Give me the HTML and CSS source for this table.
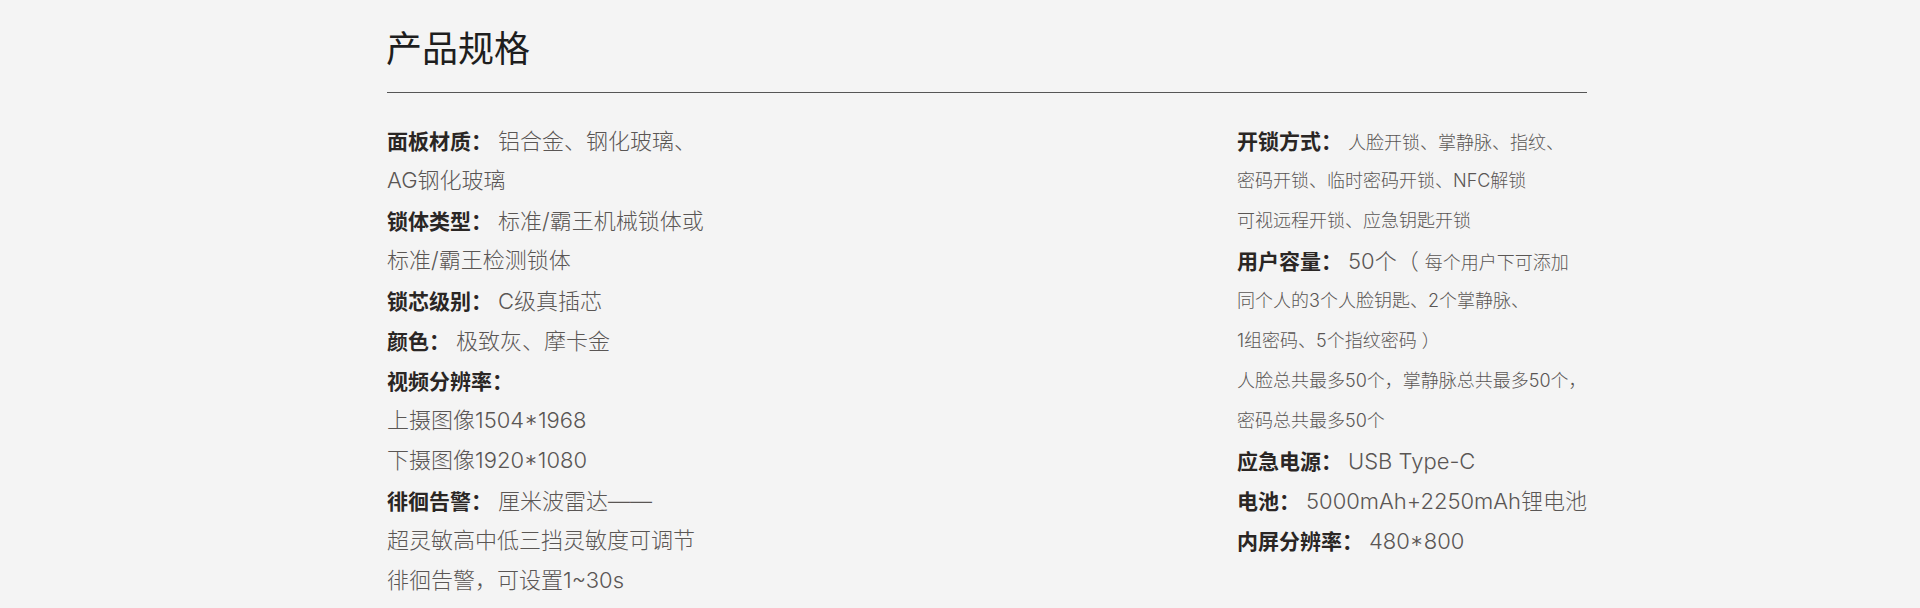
FILE: index.html
```html
<!DOCTYPE html>
<html lang="zh-CN">
<head>
<meta charset="utf-8">
<title>产品规格</title>
<link rel="stylesheet" href="styles.css">
</head>
<body>
<section class="specs">
  <h1 class="title">产品规格</h1>
  <div class="rule"></div>
  <div class="cols">
    <div class="col">
      <div class="row"><span class="k">面板材质：</span><span class="v">铝合金、钢化玻璃、</span></div>
      <div class="row"><span class="v">AG钢化玻璃</span></div>
      <div class="row"><span class="k">锁体类型：</span><span class="v">标准/霸王机械锁体或</span></div>
      <div class="row"><span class="v">标准/霸王检测锁体</span></div>
      <div class="row"><span class="k">锁芯级别：</span><span class="v">C级真插芯</span></div>
      <div class="row"><span class="k">颜色：</span><span class="v">极致灰、摩卡金</span></div>
      <div class="row"><span class="k">视频分辨率：</span></div>
      <div class="row"><span class="v">上摄图像1504*1968</span></div>
      <div class="row"><span class="v">下摄图像1920*1080</span></div>
      <div class="row"><span class="k">徘徊告警：</span><span class="v">厘米波雷达——</span></div>
      <div class="row"><span class="v">超灵敏高中低三挡灵敏度可调节</span></div>
      <div class="row"><span class="v">徘徊告警，可设置1~30s</span></div>
    </div>
    <div class="col">
      <div class="row"><span class="k">开锁方式：</span><span class="s">人脸开锁、掌静脉、指纹、</span></div>
      <div class="row"><span class="s">密码开锁、临时密码开锁、NFC解锁</span></div>
      <div class="row"><span class="s">可视远程开锁、应急钥匙开锁</span></div>
      <div class="row"><span class="k">用户容量：</span><span class="v">50个（ </span><span class="s">每个用户下可添加</span></div>
      <div class="row"><span class="s">同个人的3个人脸钥匙、2个掌静脉、</span></div>
      <div class="row"><span class="s">1组密码、5个指纹密码 ）</span></div>
      <div class="row"><span class="s">人脸总共最多50个，掌静脉总共最多50个，</span></div>
      <div class="row"><span class="s">密码总共最多50个</span></div>
      <div class="row"><span class="k">应急电源：</span><span class="v">USB Type-C</span></div>
      <div class="row"><span class="k">电池：</span><span class="v">5000mAh+2250mAh锂电池</span></div>
      <div class="row"><span class="k">内屏分辨率：</span><span class="v">480*800</span></div>
    </div>
  </div>
</section>
</body>
</html>
```

FILE: styles.css
```css
html, body {
  margin: 0;
  padding: 0;
  background: #f4f4f4;
}
body {
  font-family: "Noto Sans CJK SC", "Noto Sans", sans-serif;
  color: #2a2624;
}
.specs {
  width: 1200px;
  margin-left: 387px;
  padding-top: 21px;
}
.title {
  margin: 0;
  font-size: 36px;
  line-height: 50px;
  font-weight: 400;
  color: #1e1e1e;
  margin-left: -1px;
}
.rule {
  margin-top: 21px;
  height: 1px;
  background: #555;
}
.cols {
  margin-top: 27px;
  display: grid;
  grid-template-columns: 850px 350px;
}
.row {
  height: 40px;
  line-height: 40px;
  white-space: nowrap;
}
.k {
  font-size: 21px;
  font-weight: 700;
  color: #2a2624;
  margin-right: 6px;
}
.v,
.s {
  font-family: Inter, "Noto Sans CJK SC", sans-serif;
  font-weight: 300;
  color: #5a5654;
}
.v {
  font-size: 22px;
}
.s {
  font-size: 18px;
}
```
